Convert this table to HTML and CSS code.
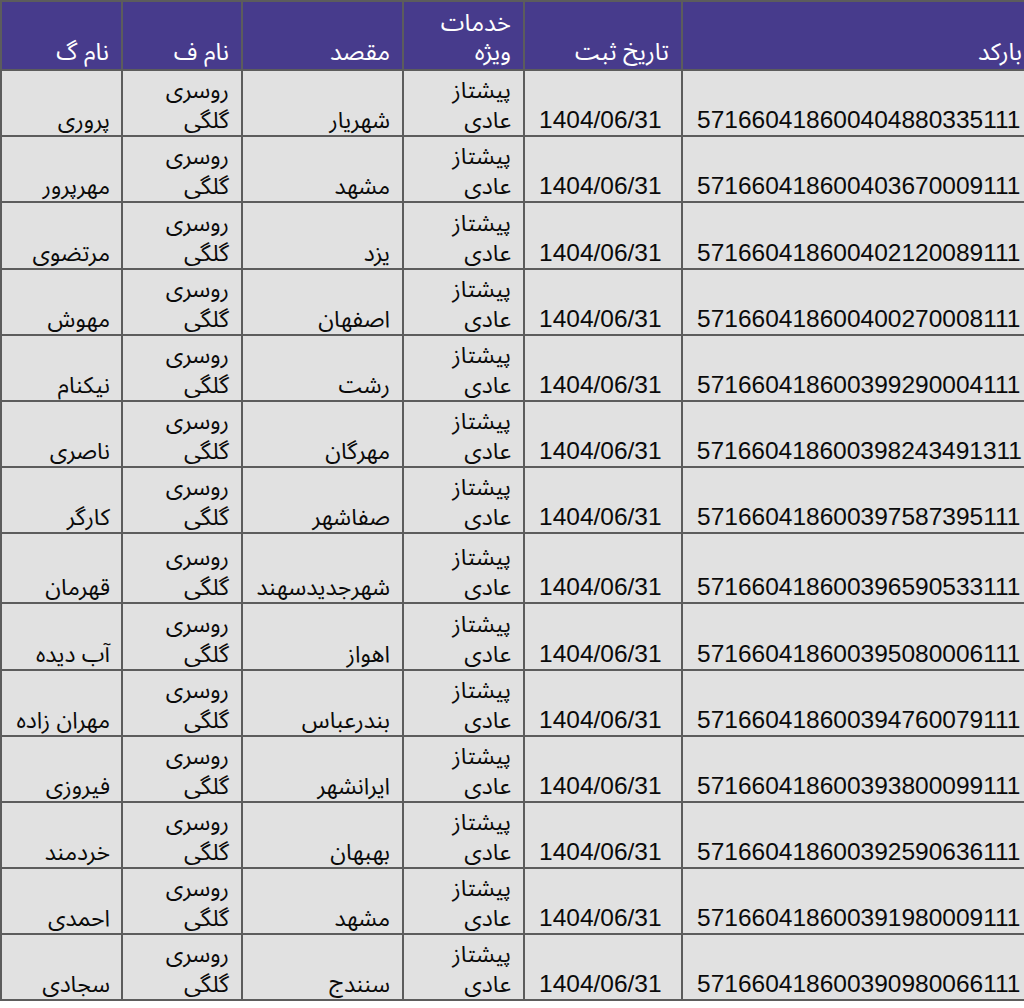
FILE: index.html
```html
<!DOCTYPE html>
<html lang="fa">
<head>
<meta charset="utf-8">
<title>لیست مرسولات</title>
<link rel="stylesheet" href="styles.css">
</head>
<body>
<div class="sheet">
<table class="grid" dir="rtl">
  <colgroup>
    <col class="c-barcode">
    <col class="c-date">
    <col class="c-service">
    <col class="c-dest">
    <col class="c-fname">
    <col class="c-lname">
  </colgroup>
  <thead>
    <tr class="head">
      <th>بارکد</th>
      <th>تاریخ ثبت</th>
      <th>خدمات<br>ویژه</th>
      <th>مقصد</th>
      <th>نام ف</th>
      <th>نام گ</th>
    </tr>
  </thead>
  <tbody>
    <tr><td class="num">571660418600404880335111</td><td class="num">1404/06/31</td><td>پیشتاز<br>عادی</td><td>شهریار</td><td>روسری<br>گلگی</td><td class="name">پروری</td></tr>
    <tr><td class="num">571660418600403670009111</td><td class="num">1404/06/31</td><td>پیشتاز<br>عادی</td><td>مشهد</td><td>روسری<br>گلگی</td><td class="name">مهرپرور</td></tr>
    <tr><td class="num">571660418600402120089111</td><td class="num">1404/06/31</td><td>پیشتاز<br>عادی</td><td>یزد</td><td>روسری<br>گلگی</td><td class="name">مرتضوی</td></tr>
    <tr><td class="num">571660418600400270008111</td><td class="num">1404/06/31</td><td>پیشتاز<br>عادی</td><td>اصفهان</td><td>روسری<br>گلگی</td><td class="name">مهوش</td></tr>
    <tr><td class="num">571660418600399290004111</td><td class="num">1404/06/31</td><td>پیشتاز<br>عادی</td><td>رشت</td><td>روسری<br>گلگی</td><td class="name">نیکنام</td></tr>
    <tr><td class="num">571660418600398243491311</td><td class="num">1404/06/31</td><td>پیشتاز<br>عادی</td><td>مهرگان</td><td>روسری<br>گلگی</td><td class="name">ناصری</td></tr>
    <tr><td class="num">571660418600397587395111</td><td class="num">1404/06/31</td><td>پیشتاز<br>عادی</td><td>صفاشهر</td><td>روسری<br>گلگی</td><td class="name">کارگر</td></tr>
    <tr class="tall"><td class="num">571660418600396590533111</td><td class="num">1404/06/31</td><td>پیشتاز<br>عادی</td><td>شهرجدیدسهند</td><td>روسری<br>گلگی</td><td class="name">قهرمان</td></tr>
    <tr><td class="num">571660418600395080006111</td><td class="num">1404/06/31</td><td>پیشتاز<br>عادی</td><td>اهواز</td><td>روسری<br>گلگی</td><td class="name">آب دیده</td></tr>
    <tr><td class="num">571660418600394760079111</td><td class="num">1404/06/31</td><td>پیشتاز<br>عادی</td><td>بندرعباس</td><td>روسری<br>گلگی</td><td class="name">مهران زاده</td></tr>
    <tr><td class="num">571660418600393800099111</td><td class="num">1404/06/31</td><td>پیشتاز<br>عادی</td><td>ایرانشهر</td><td>روسری<br>گلگی</td><td class="name">فیروزی</td></tr>
    <tr><td class="num">571660418600392590636111</td><td class="num">1404/06/31</td><td>پیشتاز<br>عادی</td><td>بهبهان</td><td>روسری<br>گلگی</td><td class="name">خردمند</td></tr>
    <tr><td class="num">571660418600391980009111</td><td class="num">1404/06/31</td><td>پیشتاز<br>عادی</td><td>مشهد</td><td>روسری<br>گلگی</td><td class="name">احمدی</td></tr>
    <tr><td class="num">571660418600390980066111</td><td class="num">1404/06/31</td><td>پیشتاز<br>عادی</td><td>سنندج</td><td>روسری<br>گلگی</td><td class="name">سجادی</td></tr>
  </tbody>
</table>
</div>
</body>
</html>
```
FILE: styles.css
```css
html, body {
  margin: 0;
  padding: 0;
  overflow: hidden;
  background: #ffffff;
}

.sheet {
  width: 1024px;
  height: 1008px;
  overflow: hidden;
}

.grid {
  table-layout: fixed;
  width: 1036px;
  border-collapse: collapse;
  font-family: "Liberation Sans", "Noto Sans Arabic UI", "Noto Sans Arabic", "Noto Naskh Arabic", "DejaVu Sans", sans-serif;
  font-size: 24.5px;
  line-height: 30px;
  color: #0a0a0a;
}

.c-barcode { width: 353px; }
.c-date { width: 158px; }
.c-service { width: 121px; }
.c-dest { width: 161px; }
.c-fname { width: 120px; }
.c-lname { width: 121px; }

.grid th,
.grid td {
  border: 2px solid #5c5c5c;
  padding: 0 12px 0 12px;
  text-align: right;
  vertical-align: bottom;
  white-space: nowrap;
}

.grid th {
  background: #473b8c;
  color: #ffffff;
  font-weight: normal;
  font-size: 24px;
  height: 64px;
  padding-bottom: 3px;
  line-height: 29px;
}

.grid td {
  background: #e1e1e1;
  height: 64.2px;
  font-size: 23px;
}

.grid td.num {
  text-align: left;
  padding-left: 14px;
  font-size: 24.5px;
}

.grid td.name {
  padding-right: 11px;
  padding-left: 2px;
  font-size: 23px;
}

.grid tr.tall td {
  height: 68px;
}
```
